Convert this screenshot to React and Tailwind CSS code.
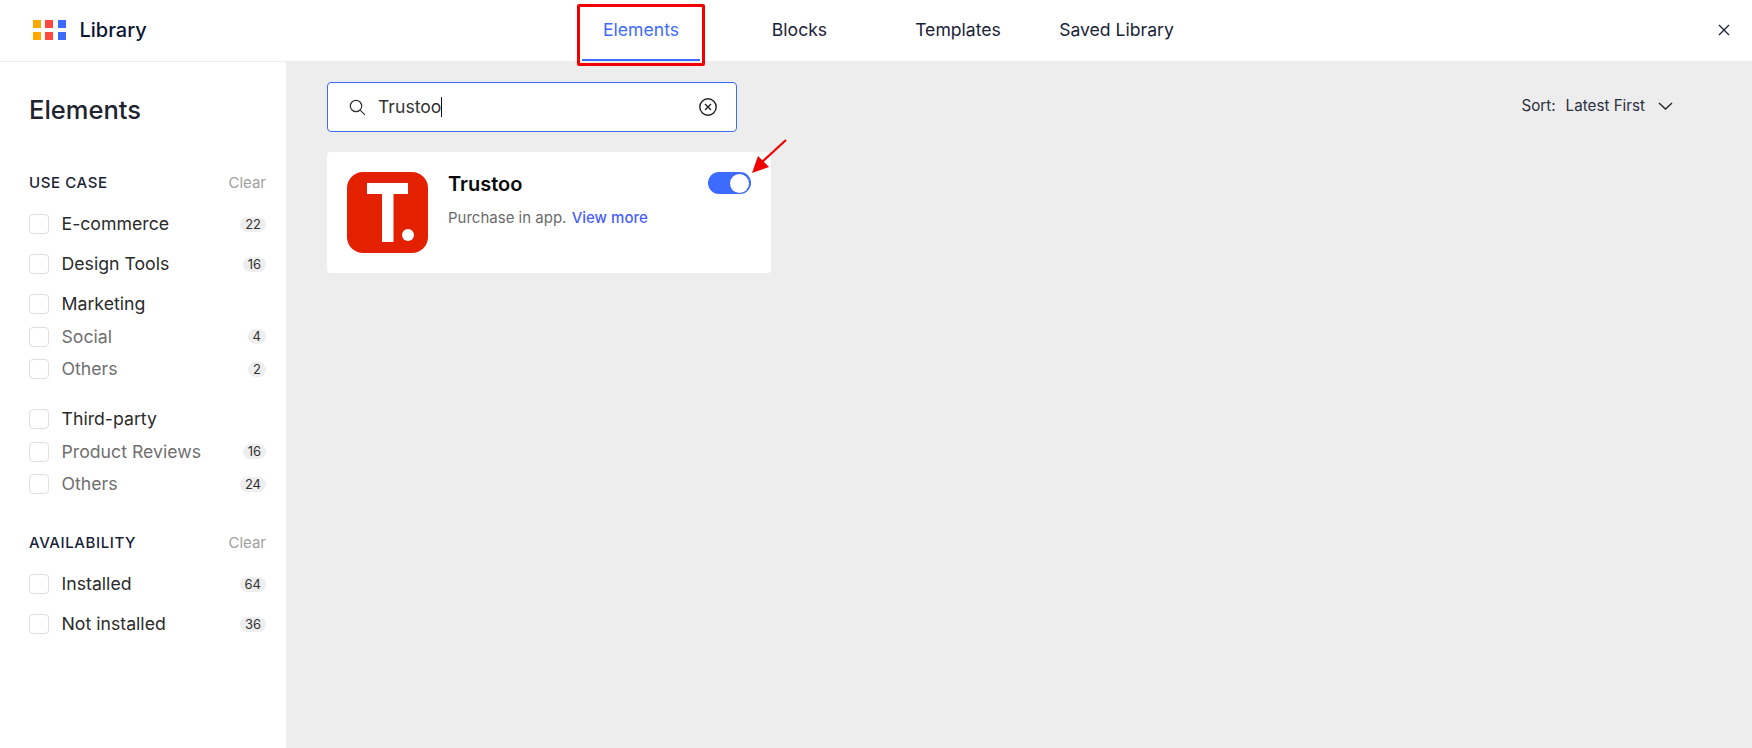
import React from "react";

const Row = ({ label, count, sub }) => (
  <div className="flex items-center h-5">
    <span className="w-5 h-5 shrink-0 rounded-[4px] border border-[#dfdfe6] bg-white" />
    <span className={`ml-[12.5px] flex-1 text-[17.7px] leading-5 ${sub ? "text-[#6f6f6f]" : "text-[#2b2b2b]"}`}>{label}</span>
    {count && (
      <span className="h-[15px] px-[5px] rounded-full bg-[#eeeeee] text-[13px] leading-[15px] text-[#333333]">{count}</span>
    )}
  </div>
);

const SectionHead = ({ title }) => (
  <div className="flex items-center justify-between h-5">
    <span className="text-[15px] leading-5 font-medium tracking-[0.6px] text-[#1a2238]">{title}</span>
    <span className="text-[15px] leading-5 text-[#a0a0a0]">Clear</span>
  </div>
);

const Tab = ({ label, active }) => (
  <div className={`w-[118px] h-[61px] pt-[2px] flex items-center justify-center text-[17.6px] border-b-2 ${active ? "border-[#3d6bff] text-[#3d6bff]" : "border-transparent text-[#1a2238]"}`}>
    <span className="whitespace-nowrap">{label}</span>
  </div>
);

export default function App() {
  return (
    <div className="relative h-[748px] w-full overflow-hidden flex flex-col bg-white font-['Inter',sans-serif]">
      <header className="h-[62px] shrink-0 flex items-center border-b border-[#eeeeee] bg-white">
        <div className="w-[582px] shrink-0 flex items-center pl-[32.5px] mb-[2px]">
          <div className="grid grid-cols-3 gap-x-[4.5px] gap-y-[4px] w-[33px]">
            <span className="h-2 bg-[#ffa800]" />
            <span className="h-2 bg-[#ff4a3d]" />
            <span className="h-2 bg-[#3d6bff]" />
            <span className="h-2 bg-[#ffa800]" />
            <span className="h-2 bg-[#ff4a3d]" />
            <span className="h-2 bg-[#3d6bff]" />
          </div>
          <span className="ml-[14px] text-[20px] font-medium text-[#0b1533]">Library</span>
        </div>
        <nav className="flex gap-[40.5px] self-start">
          <Tab label="Elements" active />
          <Tab label="Blocks" />
          <Tab label="Templates" />
          <Tab label="Saved Library" />
        </nav>
        <div className="flex-1 flex justify-end pr-[22px] mb-[2px]">
          <svg width="12" height="12" viewBox="0 0 12 12" fill="none" stroke="#1a2238" strokeWidth="1.3">
            <path d="M1 1l10 10M11 1L1 11" />
          </svg>
        </div>
      </header>

      <div className="flex flex-1 min-h-0">
        <aside className="w-[286px] shrink-0 bg-white pl-[29px] pr-[20px] pt-[34px]">
          <h2 className="text-[25.5px] leading-7 font-medium text-[#1f2330]">Elements</h2>
          <div className="mt-[49px]"><SectionHead title="USE CASE" /></div>
          <div className="mt-[21px] flex flex-col gap-5">
            <Row label="E-commerce" count="22" />
            <Row label="Design Tools" count="16" />
            <div className="flex flex-col gap-[12.5px]">
              <Row label="Marketing" />
              <Row label="Social" count="4" sub />
              <Row label="Others" count="2" sub />
            </div>
            <div className="flex flex-col gap-[12.5px] mt-[10px]">
              <Row label="Third-party" />
              <Row label="Product Reviews" count="16" sub />
              <Row label="Others" count="24" sub />
            </div>
          </div>
          <div className="mt-[39px]"><SectionHead title="AVAILABILITY" /></div>
          <div className="mt-[21px] flex flex-col gap-5">
            <Row label="Installed" count="64" />
            <Row label="Not installed" count="36" />
          </div>
        </aside>

        <main className="flex-1 bg-[#ededed] pl-[41px] pr-[79px] pt-[20px]">
          <div className="flex items-center justify-between">
            <div className="w-[410px] h-[50px] flex items-center bg-white border border-[#3d6bff] rounded-[4px] pl-[21px] pr-[19px]">
              <svg width="17" height="17" viewBox="0 0 17 17" fill="none" stroke="#333333" strokeWidth="1.2" strokeLinecap="round">
                <circle cx="7" cy="7" r="5.7" />
                <path d="M11.2 11.2L15.6 15.6" />
              </svg>
              <span className="ml-[12px] text-[17.6px] text-[#333333]">Trustoo</span>
              <span className="w-px h-5 bg-[#111111]" />
              <span className="flex-1" />
              <svg width="18" height="18" viewBox="0 0 18 18" fill="none" stroke="#222222" strokeWidth="1.4">
                <circle cx="9" cy="9" r="8.2" />
                <path d="M6 6l6 6M12 6l-6 6" />
              </svg>
            </div>
            <div className="flex items-center mb-[1px] text-[15.2px] text-[#2b3040]">
              <span>Sort:</span>
              <span className="ml-[10px]">Latest First</span>
              <svg className="ml-[13px]" width="15" height="8" viewBox="0 0 15 8" fill="none" stroke="#222222" strokeWidth="1.3">
                <path d="M1 1l6.5 6 6.5-6" />
              </svg>
            </div>
          </div>

          <div className="mt-[20px] w-[444px] h-[121px] bg-white rounded-[4px] flex p-5">
            <svg width="81" height="81" viewBox="0 0 81 81" className="shrink-0">
              <rect width="81" height="81" rx="16" fill="#e32000" />
              <rect x="20" y="11" width="41" height="11" fill="#fff" />
              <rect x="35" y="11" width="11.5" height="59" fill="#fff" />
              <circle cx="61" cy="63" r="6" fill="#fff" />
            </svg>
            <div className="ml-5 flex-1 min-w-0">
              <div className="flex items-start justify-between">
                <span className="text-[20px] leading-[24px] font-semibold text-[#0a0a0a]">Trustoo</span>
                <span className="w-[43px] h-[22px] rounded-full bg-[#3d6bff] flex items-center justify-end pr-[2px]">
                  <span className="w-[19px] h-[19px] rounded-full bg-white" />
                </span>
              </div>
              <p className="mt-[12px] text-[15px] leading-5 text-[#6b6b6b]">
                Purchase in app. <span className="ml-[1px] font-medium text-[#4a5fff]">View more</span>
              </p>
            </div>
          </div>
        </main>
      </div>

      {/* annotations drawn over the screenshot */}
      <div className="absolute left-[577px] top-[4px] w-[128px] h-[62px] border-[3px] border-[#f00000] rounded-[2px] pointer-events-none" />
      <svg className="absolute left-[745px] top-[135px] pointer-events-none" width="45" height="42" viewBox="0 0 45 42">
        <path d="M41 5L16 28" stroke="#f00000" strokeWidth="2.2" fill="none" />
        <path d="M7 38L13 21L24 32Z" fill="#f00000" />
      </svg>
    </div>
  );
}
